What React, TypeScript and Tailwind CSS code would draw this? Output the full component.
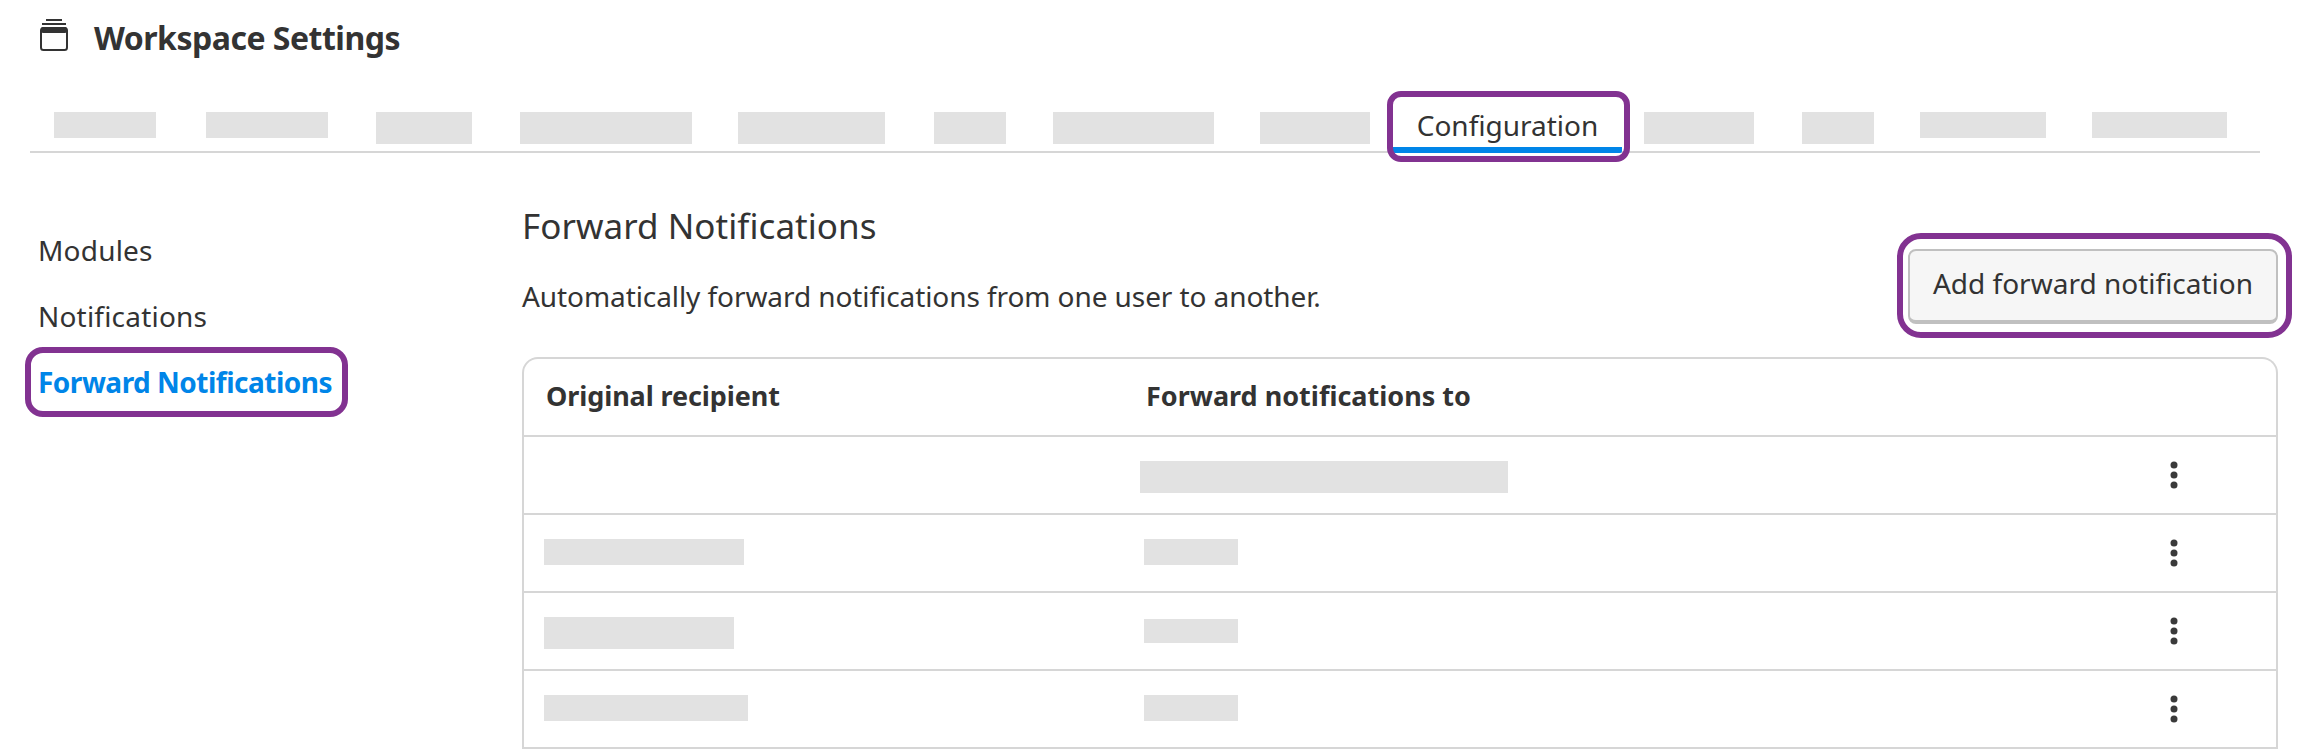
const font = "font-['Noto_Sans',sans-serif]";

const tabsBefore = [
  "ml-[24px] w-[102px] h-[26px]",
  "ml-[50px] w-[122px] h-[26px]",
  "ml-[48px] w-[96px] h-[32px]",
  "ml-[48px] w-[172px] h-[32px]",
  "ml-[46px] w-[147px] h-[32px]",
  "ml-[49px] w-[72px] h-[32px]",
  "ml-[47px] w-[161px] h-[32px]",
  "ml-[46px] w-[110px] h-[32px]",
];

const tabsAfter = [
  "ml-[22px] w-[110px] h-[32px]",
  "ml-[48px] w-[72px] h-[32px]",
  "ml-[46px] w-[126px] h-[26px]",
  "ml-[46px] w-[135px] h-[26px]",
];

const rows = [
  { left: "", right: "ml-[-4px] mt-[24px] w-[368px] h-[32px]" },
  { left: "w-[200px] h-[26px]", right: "mt-[24px] w-[94px] h-[26px]" },
  { left: "w-[190px] h-[32px]", right: "mt-[26px] w-[94px] h-[24px]" },
  { left: "w-[204px] h-[26px]", right: "mt-[24px] w-[94px] h-[26px]" },
];

function Kebab() {
  return (
    <svg width="8" height="28" viewBox="0 0 8 28" fill="#3a3a3a" className="self-center mr-[98px] shrink-0">
      <circle cx="4" cy="4" r="3.5" />
      <circle cx="4" cy="14" r="3.5" />
      <circle cx="4" cy="24" r="3.5" />
    </svg>
  );
}

export default function App() {
  return (
    <div className={`w-[2300px] h-[750px] overflow-hidden bg-white text-[#333] ${font}`}>
      {/* Header */}
      <div className="flex items-start pl-[40px] pt-[19px] h-[112px]">
        <svg width="28" height="32" viewBox="0 0 28 32" fill="none" className="shrink-0">
          <rect x="6" y="0" width="16" height="2" fill="#333" />
          <rect x="2" y="4" width="24" height="2" fill="#333" />
          <rect x="1" y="9" width="26" height="22" rx="2.5" stroke="#333" strokeWidth="2" />
          <rect x="1" y="8" width="26" height="6" rx="2" fill="#333" />
        </svg>
        <h1 className="ml-[26px] mt-[-1px] text-[32px] leading-[40px] font-bold tracking-[-0.5px]">Workspace Settings</h1>
      </div>

      {/* Tabs */}
      <div className="ml-[30px] w-[2230px] h-[41px] flex items-start border-b-2 border-[#d6d6d6]">
        {tabsBefore.map((c) => (
          <div key={c} className={`${c} shrink-0 bg-[#e2e2e2]`} />
        ))}
        <div className="relative ml-[23px] w-[229px] h-[41px] shrink-0 border-b-[6px] border-[#0085e8] rounded-[2px] text-center text-[28px] leading-[26px]">
          Configuration
          <div className="absolute left-[-6px] right-[-8px] top-[-21px] bottom-[-15px] border-[6px] border-[#823291] rounded-[14px]" />
        </div>
        {tabsAfter.map((c) => (
          <div key={c} className={`${c} shrink-0 bg-[#e2e2e2]`} />
        ))}
      </div>

      <div className="flex">
        {/* Sidebar */}
        <nav className="w-[522px] shrink-0 pl-[38px] pt-[64px] flex flex-col text-[28px] tracking-[0.2px]">
          <a className="h-[66px] leading-[66px]">Modules</a>
          <a className="h-[66px] leading-[66px]">Notifications</a>
          <a className="relative w-fit h-[66px] leading-[66px] font-bold text-[#0085e8] tracking-[-0.5px]">
            Forward Notifications
            <div className="absolute left-[-13px] right-[-16px] top-[-2px] bottom-[-2px] border-[6px] border-[#823291] rounded-[18px]" />
          </a>
        </nav>

        {/* Main */}
        <div className="w-[1756px] shrink-0">
          <div className="flex justify-between h-[204px] pt-[50px]">
            <div>
              <h2 className="text-[35px] leading-[46px] tracking-[0.05px]">Forward Notifications</h2>
              <p className="mt-[28px] text-[28px] leading-[38px] tracking-[-0.08px]">
                Automatically forward notifications from one user to another.
              </p>
            </div>
            <button className="relative mt-[46px] pb-[5px] w-[370px] h-[75px] rounded-[8px] bg-[#f6f6f6] border-2 border-b-4 border-[#c0c0c0] text-[28px]">
              Add forward notification
              <div className="absolute left-[-13px] right-[-16px] top-[-18px] bottom-[-18px] border-[6px] border-[#823291] rounded-[24px]" />
            </button>
          </div>

          {/* Table */}
          <div className="border-2 border-b-0 border-[#d6d6d6] rounded-t-[16px]">
            <div className="flex h-[78px] border-b-2 border-[#d6d6d6] text-[27px] leading-[74px] font-bold">
              <div className="w-[622px] shrink-0 pl-[22px] tracking-[-0.1px]">Original recipient</div>
              <div>Forward notifications to</div>
            </div>
            {rows.map((r, i) => (
              <div key={i} className="flex items-start h-[78px] border-b-2 border-[#d6d6d6]">
                <div className="w-[620px] shrink-0 pl-[20px] pt-[24px]">
                  {r.left && <div className={`${r.left} bg-[#e2e2e2]`} />}
                </div>
                <div className={`${r.right} bg-[#e2e2e2]`} />
                <div className="flex-1" />
                <Kebab />
              </div>
            ))}
          </div>
        </div>
      </div>
    </div>
  );
}
